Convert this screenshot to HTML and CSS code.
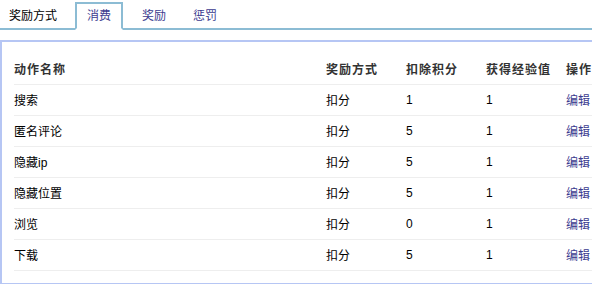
FILE: index.html
```html
<!DOCTYPE html>
<html lang="zh-CN">
<head>
    <meta charset="UTF-8">
    <meta name="viewport" content="width=device-width, initial-scale=1.0">
    <title>奖励方式</title>
    <link rel="stylesheet" href="styles.css">
</head>
<body>

<div class="tabs">
    <span class="tab tab-label">奖励方式</span>
    <a class="tab active" href="#">消费</a>
    <a class="tab tab-reward" href="#">奖励</a>
    <a class="tab tab-punish" href="#">惩罚</a>
</div>

<section class="panel">
<table class="rules">
    <colgroup>
        <col class="col-name">
        <col class="col-mid">
        <col class="col-mid">
        <col class="col-mid">
        <col>
    </colgroup>
    <thead>
        <tr>
            <th>动作名称</th>
            <th>奖励方式</th>
            <th>扣除积分</th>
            <th>获得经验值</th>
            <th>操作</th>
        </tr>
    </thead>
    <tbody>
        <tr><td>搜索</td><td>扣分</td><td>1</td><td>1</td><td><a href="#">编辑</a></td></tr>
        <tr><td>匿名评论</td><td>扣分</td><td>5</td><td>1</td><td><a href="#">编辑</a></td></tr>
        <tr><td>隐藏ip</td><td>扣分</td><td>5</td><td>1</td><td><a href="#">编辑</a></td></tr>
        <tr><td>隐藏位置</td><td>扣分</td><td>5</td><td>1</td><td><a href="#">编辑</a></td></tr>
        <tr><td>浏览</td><td>扣分</td><td>0</td><td>1</td><td><a href="#">编辑</a></td></tr>
        <tr><td>下载</td><td>扣分</td><td>5</td><td>1</td><td><a href="#">编辑</a></td></tr>
    </tbody>
</table>
</section>

</body>
</html>
```

FILE: styles.css
```css
:root{
    --tab-line: #8cbcd4;
    --panel-line: #b6c6f4;
    --link-color: #3b3b8f;
}

*{
padding: 0;
margin: 0;
box-sizing: border-box;
font-family: "Liberation Sans", "Noto Sans CJK SC", sans-serif;
}

body{
background: #fff;
color: #000;
font-size: 12px;
overflow: hidden;
}

a{
color: var(--link-color);
text-decoration: none;
}

.tabs{
display: flex;
align-items: flex-end;
padding: 2px 0 0 7px;
border-bottom: 2px solid var(--tab-line);
}

.tab{
display: block;
line-height: 24px;
padding: 0 10px;
border: 2px solid transparent;
margin-bottom: -2px;
}

.tab-label{
padding: 0;
color: #000;
}

.tab.active{
margin-left: 16px;
border-color: var(--tab-line);
border-bottom-color: #fff;
background: #fff;
}

.tab-reward{
    margin-left: 7px;
}

.tab-punish{
    margin-left: 3px;
}

.panel{
margin-top: 10px;
padding: 11px 0 12px 12px;
border: 2px solid var(--panel-line);
border-right: none;
overflow: hidden;
}

.rules{
width: 610px;
table-layout: fixed;
border-collapse: collapse;
white-space: nowrap;
}

.col-name{
    width: 312px;
}

.col-mid{
    width: 80px;
}

.rules th,
.rules td{
height: 31px;
padding: 0;
text-align: left;
vertical-align: middle;
border-bottom: 1px solid #eeeeee;
}

.rules th{
font-size: 12px;
font-weight: bold;
letter-spacing: 1px;
color: #333;
}
```
